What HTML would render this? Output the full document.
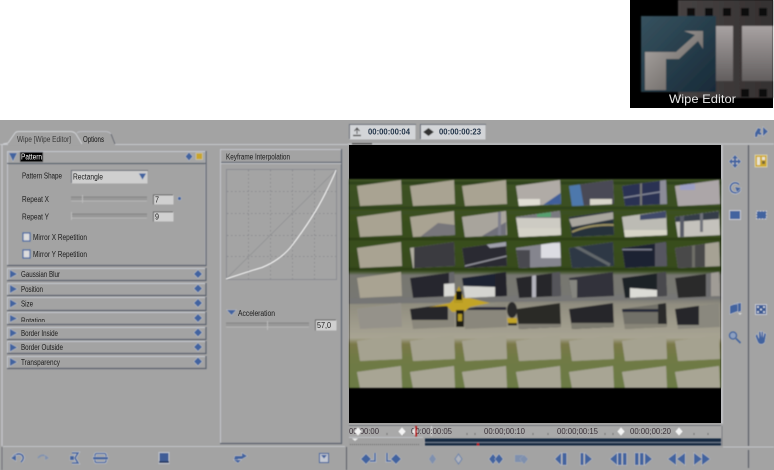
<!DOCTYPE html>
<html><head><meta charset="utf-8"><style>
html,body{margin:0;padding:0;background:#fff}
svg{display:block;position:absolute;left:0;top:0}
text{font-family:"Liberation Sans",sans-serif;font-size:8px;fill:#1a1a1a}
.i{fill:#42639f;stroke:#c3c8d2;stroke-width:.8;paint-order:stroke}
.f{fill:#7f90ae;stroke:#adb1ba;stroke-width:.6;paint-order:stroke}
.l{fill:none;stroke:#42639f;stroke-width:1.6}
.m{fill:none;stroke:#c3c8d2;stroke-width:2.8}
</style></head><body>
<svg width="774" height="470" viewBox="0 0 774 470" xmlns="http://www.w3.org/2000/svg">
<defs>
<filter id="b" x="-2%" y="-2%" width="104%" height="104%"><feGaussianBlur stdDeviation=".45"/></filter>
<filter id="v" x="-2%" y="-2%" width="104%" height="104%"><feGaussianBlur stdDeviation=".85"/></filter>
<filter id="t" x="-5%" y="-20%" width="110%" height="140%"><feGaussianBlur stdDeviation=".3"/></filter>
<linearGradient id="fs" x1="0" x2="1" y1="0" y2="0"><stop offset="0" stop-color="#464242"/><stop offset="1" stop-color="#343030"/></linearGradient>
<linearGradient id="fw" x1="0" x2="0" y1="0" y2="1"><stop offset="0" stop-color="#a8a2a2"/><stop offset="1" stop-color="#625e5e"/></linearGradient>
<linearGradient id="bs" x1="0" x2="1" y1="0" y2="1"><stop offset="0" stop-color="#36525f"/><stop offset="1" stop-color="#182a38"/></linearGradient>
<linearGradient id="gs" x1="0" x2="1" y1="0" y2="1"><stop offset="0" stop-color="#b0aba8"/><stop offset="1" stop-color="#5c5855"/></linearGradient>
<linearGradient id="bgr" x1="0" x2="0" y1="0" y2="1">
<stop offset="0" stop-color="#3c5120"/><stop offset=".44" stop-color="#364b1e"/><stop offset=".46" stop-color="#76766f"/><stop offset=".57" stop-color="#777772"/><stop offset=".6" stop-color="#908d7f"/><stop offset=".76" stop-color="#a8a493"/><stop offset=".79" stop-color="#7a7848"/><stop offset=".86" stop-color="#6f7a44"/><stop offset="1" stop-color="#6b7a44"/>
</linearGradient>
<clipPath id="tiles">
<path d="M357 186L401 180L402 204L360 206ZM410 186L454 180L455 204L413 206ZM462 186L506 180L507 204L465 206ZM516 186L560 180L561 204L519 206ZM569 186L613 180L614 204L572 206ZM622 186L666 180L667 204L625 206ZM675 186L719 180L720 204L678 206Z"/>
<path d="M357 217L401 211L402 235L360 237ZM410 217L454 211L455 235L413 237ZM462 217L506 211L507 235L465 237ZM516 217L560 211L561 235L519 237ZM569 217L613 211L614 235L572 237ZM622 217L666 211L667 235L625 237ZM675 217L719 211L720 235L678 237Z"/>
<path d="M357 248L401 242L402 266L360 268ZM410 248L454 242L455 266L413 268ZM462 248L506 242L507 266L465 268ZM516 248L560 242L561 266L519 268ZM569 248L613 242L614 266L572 268ZM622 248L666 242L667 266L625 268ZM675 248L719 242L720 266L678 268Z"/>
<path d="M357 278L401 272L402 296L360 298ZM410 278L454 272L455 296L413 298ZM462 278L506 272L507 296L465 298ZM516 278L560 272L561 296L519 298ZM569 278L613 272L614 296L572 298ZM622 278L666 272L667 296L625 298ZM675 278L719 272L720 296L678 298Z"/>
<path d="M357 309L401 303L402 327L360 329ZM410 309L454 303L455 327L413 329ZM462 309L506 303L507 327L465 329ZM516 309L560 303L561 327L519 329ZM569 309L613 303L614 327L572 329ZM622 309L666 303L667 327L625 329ZM675 309L719 303L720 327L678 329Z"/>
<path d="M357 341L401 335L402 359L360 361ZM410 341L454 335L455 359L413 361ZM462 341L506 335L507 359L465 361ZM516 341L560 335L561 359L519 361ZM569 341L613 335L614 359L572 361ZM622 341L666 335L667 359L625 361ZM675 341L719 335L720 359L678 361Z"/>
<path d="M357 372L401 366L402 388L360 388ZM410 372L454 366L455 388L413 388ZM462 372L506 366L507 388L465 388ZM516 372L560 366L561 388L519 388ZM569 372L613 366L614 388L572 388ZM622 372L666 366L667 388L625 388ZM675 372L719 366L720 388L678 388Z"/>
</clipPath>
</defs>

<rect width="774" height="120" fill="#fff"/>
<rect y="120" width="774" height="350" fill="#a3a3a3"/>

<!-- Wipe editor icon -->
<rect x="630" y="0" width="143" height="108" fill="#000"/>
<g filter="url(#v)">
<rect x="678" y="0" width="95" height="98" fill="url(#fs)"/>
<g fill="#0b0b0b"><rect x="687" y="8" width="8" height="8"/><rect x="705" y="8" width="8" height="8"/><rect x="723" y="8" width="8" height="8"/><rect x="741" y="8" width="8" height="8"/><rect x="759" y="8" width="8" height="8"/><rect x="741" y="89" width="8" height="8"/><rect x="759" y="89" width="8" height="8"/></g>
<rect x="716" y="26" width="17" height="55" fill="url(#fw)"/>
<rect x="742" y="26" width="31" height="55" fill="url(#fw)"/>
<rect x="641" y="16" width="75" height="76" fill="url(#bs)"/>
<path d="M645 52H676L695 35L684 31H703V49L698 41L679 59H666V90H645Z" fill="url(#gs)"/>
</g>
<text x="669" y="103" style="font-size:12px;fill:#e8e8e8" textLength="67" lengthAdjust="spacingAndGlyphs" filter="url(#t)">Wipe Editor</text>

<g filter="url(#b)">
<!-- frame lines -->
<path d="M2 145V446" stroke="#c6c8cc" stroke-width="1.2" fill="none"/>
<path d="M0 144.500H8M115 144.500H348" stroke="#c6c8cc" stroke-width="1"/>
<path d="M348 144H774" stroke="#c2c4c8" stroke-width="1.2"/>
<path d="M3 446.500H345" stroke="#c2c4c8"/>
<path d="M2 447V470" stroke="#6f7278"/>
<path d="M346.500 447V470" stroke="#5d6068"/>
<path d="M748.500 145V446M748.500 450V468" stroke="#5d6068" stroke-width="1.2"/>
<path d="M722 145V424" stroke="#c6c8cc" stroke-width="1.6"/>
<path d="M722 426V446" stroke="#7c7e84"/>
<path d="M723 447H774" stroke="#c2c4c8"/>

<!-- tabs -->
<path d="M3 144L8 143L15 133Q16 131.500 19 131.500H70Q74 131.500 76 134L82 144" fill="#a3a3a3" stroke="#d0d2d6"/>
<path d="M77 133Q78 131.500 82 131.500H105Q109 131.500 111 134L115 143.500" fill="#a3a3a3" stroke="#bcbec4"/>
<path d="M111 134L115 144" stroke="#5d6068" fill="none"/>
<rect x="8" y="143" width="73" height="3" fill="#a3a3a3"/>
</g>

<text x="17" y="142" textLength="54" lengthAdjust="spacingAndGlyphs" style="fill:#3a3a3a" filter="url(#t)">Wipe [Wipe Editor]</text>
<text x="83" y="142" textLength="21" lengthAdjust="spacingAndGlyphs" style="fill:#111" filter="url(#t)">Options</text>

<g filter="url(#b)">
<!-- pattern box -->
<rect x="7.500" y="151.500" width="198" height="12" fill="#a6a6a6" stroke="#c4c8d0"/>
<path d="M7 163.500H206V151" stroke="#5d6470" stroke-width="1.2" fill="none"/>
<path d="M7.500 164V265.500H205.500V164" fill="none" stroke="#c4c6cc"/>
<path d="M7 265.500H206V164" fill="none" stroke="#5d6470" stroke-width="1.2"/>
<rect x="20" y="152" width="23" height="10" fill="#000"/>
<path d="M9 153H17L13 161Z" class="i"/>
<path d="M189 152.500L192.500 156.500L189 160.500L185.500 156.500Z" class="i"/>
<rect x="196" y="153" width="6.500" height="6.500" fill="#c9a52a" stroke="#ccc8b0" stroke-width=".7"/>

<!-- dropdown -->
<rect x="71.500" y="170.500" width="76" height="13" fill="#cfcfcf"/>
<path d="M71.500 183V170.500H148" fill="none" stroke="#6c7078"/>
<path d="M139 173.500H146L142.500 179.500Z" class="i"/>

<!-- sliders -->
<rect x="71" y="197" width="76" height="4" fill="#989898"/>
<path d="M71 197H147" stroke="#858585"/><path d="M71 201H147" stroke="#b6b6b6"/>
<path d="M82.500 195V203" stroke="#bbb"/>
<rect x="71" y="214" width="76" height="4" fill="#989898"/>
<path d="M71 214H147" stroke="#858585"/><path d="M71 218H147" stroke="#b6b6b6"/>
<path d="M71.500 212V220" stroke="#bbb"/>
<rect x="153.500" y="195" width="20" height="9.500" fill="#d0d0d0"/><path d="M153.500 204.500V195H173" fill="none" stroke="#666"/>
<rect x="153.500" y="212" width="20" height="9.500" fill="#d0d0d0"/><path d="M153.500 221.500V212H173" fill="none" stroke="#666"/>
<circle cx="179.500" cy="198.500" r="1.600" class="i"/>

<!-- checkboxes -->
<rect x="23" y="233" width="7" height="8" fill="#dcdcdc" stroke="#4a6aa5" stroke-width="1.200"/>
<rect x="23" y="250" width="7" height="8" fill="#dcdcdc" stroke="#4a6aa5" stroke-width="1.200"/>

<!-- collapsed bars -->
<g fill="none">
<path d="M7.500 280V268.500H205" stroke="#c4c8d0"/><path d="M7 280.500H206V268" stroke="#5d6470" stroke-width="1.200"/>
<path d="M7.500 295V283.500H205" stroke="#c4c8d0"/><path d="M7 295.500H206V283" stroke="#5d6470" stroke-width="1.200"/>
<path d="M7.500 310V297.500H205" stroke="#c4c8d0"/><path d="M7 310.500H206V297" stroke="#5d6470" stroke-width="1.200"/>
<path d="M7.500 324V312.500H205" stroke="#c4c8d0"/><path d="M7 324.500H206V312" stroke="#5d6470" stroke-width="1.200"/>
<path d="M7.500 339V327.500H205" stroke="#c4c8d0"/><path d="M7 339.500H206V327" stroke="#5d6470" stroke-width="1.200"/>
<path d="M7.500 353V341.500H205" stroke="#c4c8d0"/><path d="M7 353.500H206V341" stroke="#5d6470" stroke-width="1.200"/>
<path d="M7.500 368V356.500H205" stroke="#c4c8d0"/><path d="M7 368.500H206V356" stroke="#5d6470" stroke-width="1.200"/>
</g>
<g class="i">
<path d="M10 270L17 274L10 278Z"/><path d="M10 285L17 289L10 293Z"/><path d="M10 299.500L17 303.500L10 307.500Z"/><path d="M10 315L17 318.500L10 322Z"/><path d="M10 329L17 333L10 337Z"/><path d="M10 343.500L17 347.500L10 351.500Z"/><path d="M10 358L17 362L10 366Z"/>
<path d="M198 270L202 274L198 278L194 274Z"/><path d="M198 284.500L202 288.500L198 292.500L194 288.500Z"/><path d="M198 299L202 303L198 307L194 303Z"/><path d="M198 314L202 318L198 322L194 318Z"/><path d="M198 328.500L202 332.500L198 336.500L194 332.500Z"/><path d="M198 343L202 347L198 351L194 347Z"/><path d="M198 357.500L202 361.500L198 365.500L194 361.500Z"/>
</g>

<!-- keyframe panel -->
<path d="M220.500 443V149.500H341" fill="none" stroke="#c4c6cc"/>
<path d="M220 443.500H341.500V149" fill="none" stroke="#5d6470" stroke-width="1.200"/>
<path d="M221 162.500H341" stroke="#5d6470" stroke-width="1.200"/><path d="M221 163.500H341" stroke="#c0c2c6"/>
<rect x="226.500" y="169.500" width="110" height="110" fill="#a4a4a4" stroke="#8a8c92"/>
<path d="M248.500 170V279M270.500 170V279M292.500 170V279M314.500 170V279M227 191.500H336M227 213.500H336M227 235.500H336M227 256.500H336" stroke="#8b8b8f" stroke-dasharray="1.500 2.500" fill="none"/>
<path d="M226 279L336 170" stroke="#8e8f92" stroke-width=".7" fill="none"/>
<path d="M226 279C238 275 250 271 262 267.500C272 263.500 284 256 292 245.500C303 231 316 212 325 194C330 184 334 176 336 170" stroke="#f4f4f4" stroke-width="1" fill="none"/>
<path d="M227 310H236L231.500 315Z" class="i"/>
<rect x="226" y="323" width="83" height="4" fill="#989898"/>
<path d="M226 323H309" stroke="#858585"/><path d="M226 327H309" stroke="#b6b6b6"/>
<path d="M267.500 321V330" stroke="#bbb"/>
<rect x="315.500" y="320" width="21" height="10.500" fill="#d0d0d0"/><path d="M315.500 330.500V320H336" fill="none" stroke="#666"/>

<!-- timecode boxes -->
<rect x="349.500" y="124.500" width="66" height="15" fill="#d3d5d8"/><path d="M349.500 139V124.500H416" fill="none" stroke="#666c78"/>
<rect x="420.500" y="124.500" width="65" height="15" fill="#d3d5d8"/><path d="M420.500 139V124.500H486" fill="none" stroke="#666c78"/>
<path d="M353 135.500H361" stroke="#444" stroke-width="1.300"/><path d="M357 128V134M354.500 131L357 128L359.500 131" stroke="#444" fill="none"/>
<path d="M428 129L424 132L428 135ZM429 129L433 132L429 135Z" stroke="#333" fill="#333"/>
<rect x="352" y="143" width="20" height="1.500" fill="#555"/>
</g>

<text x="368" y="134.500" textLength="42" lengthAdjust="spacingAndGlyphs" style="font-weight:bold;fill:#24344a" filter="url(#t)">00:00:00:04</text>
<text x="439" y="134.500" textLength="42" lengthAdjust="spacingAndGlyphs" style="font-weight:bold;fill:#24344a" filter="url(#t)">00:00:00:23</text>

<!-- panel text -->
<g filter="url(#t)">
<text x="21" y="159.500" textLength="21" lengthAdjust="spacingAndGlyphs" style="fill:#fff">Pattern</text>
<text x="22" y="178.500" textLength="40" lengthAdjust="spacingAndGlyphs">Pattern Shape</text>
<text x="73" y="179.500" textLength="30" lengthAdjust="spacingAndGlyphs">Rectangle</text>
<text x="22" y="202" textLength="27" lengthAdjust="spacingAndGlyphs">Repeat X</text>
<text x="22" y="219.500" textLength="27" lengthAdjust="spacingAndGlyphs">Repeat Y</text>
<text x="155" y="202.500" textLength="4" lengthAdjust="spacingAndGlyphs">7</text>
<text x="155" y="219.500" textLength="4" lengthAdjust="spacingAndGlyphs">9</text>
<text x="33" y="240" textLength="54" lengthAdjust="spacingAndGlyphs">Mirror X Repetition</text>
<text x="33" y="257" textLength="54" lengthAdjust="spacingAndGlyphs">Mirror Y Repetition</text>
<text x="21" y="277" textLength="39" lengthAdjust="spacingAndGlyphs">Gaussian Blur</text>
<text x="21" y="292" textLength="22" lengthAdjust="spacingAndGlyphs">Position</text>
<text x="21" y="306.500" textLength="12" lengthAdjust="spacingAndGlyphs">Size</text>
<svg x="0" y="312" width="210" height="10" viewBox="0 312 210 10" overflow="hidden"><text x="21" y="323.500" textLength="24" lengthAdjust="spacingAndGlyphs">Rotation</text></svg>
<text x="21" y="336" textLength="37" lengthAdjust="spacingAndGlyphs">Border Inside</text>
<text x="21" y="350" textLength="42" lengthAdjust="spacingAndGlyphs">Border Outside</text>
<text x="21" y="365" textLength="39" lengthAdjust="spacingAndGlyphs">Transparency</text>
<text x="226" y="159.500" textLength="64" lengthAdjust="spacingAndGlyphs">Keyframe Interpolation</text>
<text x="238" y="316" textLength="37" lengthAdjust="spacingAndGlyphs">Acceleration</text>
<text x="317" y="328" textLength="14" lengthAdjust="spacingAndGlyphs">57,0</text>
</g>

<!-- video -->
<rect x="349" y="145" width="372" height="278" fill="#000"/>
<g filter="url(#v)">
<rect x="349" y="179" width="372" height="209" fill="url(#bgr)"/>
<path d="M349 183H721M349 208H721M349 239H721M349 269H721" stroke="#2a3e18" stroke-width="3" opacity=".75"/>
<path d="M349 301L721 296" stroke="#767674" stroke-width="6"/>
<g clip-path="url(#tiles)">
<rect x="349" y="179" width="372" height="209" fill="#a9a392"/>
<!-- row 0 -->
<rect x="516" y="179" width="46" height="28" fill="#b0aba6"/><path d="M540 207L562 192V207Z" fill="#3f5f9a"/><rect x="516" y="199" width="24" height="7" fill="#e0ded4"/>
<rect x="569" y="179" width="46" height="28" fill="#4a4a54"/><path d="M569 186L580 184L584 207H572Z" fill="#4e78ac"/><rect x="590" y="199" width="22" height="7" fill="#d8d6ca"/>
<rect x="622" y="179" width="46" height="28" fill="#2a3252"/><path d="M622 198L666 191" stroke="#8e92a0" stroke-width="1.200"/><rect x="640" y="180" width="2" height="26" fill="#777"/><rect x="660" y="179" width="8" height="28" fill="#8c8c98"/>
<rect x="675" y="179" width="46" height="28" fill="#aca6a8"/><rect x="680" y="184" width="15" height="6" fill="#9ca0c4"/>
<!-- row 1 -->
<path d="M420 237L438 223L455 225V237Z" fill="#77767a"/>
<rect x="462" y="211" width="46" height="26" fill="#a8a49c"/><path d="M482 236L506 222V237Z" fill="#70707a"/><rect x="498" y="211" width="3" height="26" fill="#7f7f8c"/>
<rect x="516" y="211" width="46" height="26" fill="#cdcbc3"/><rect x="516" y="211" width="46" height="7" fill="#7a7a80"/><rect x="537" y="211" width="14" height="6" fill="#56a070"/><rect x="516" y="228" width="46" height="9" fill="#d4d2c8"/>
<rect x="569" y="211" width="46" height="26" fill="#27303a"/><path d="M569 219L614 212V219L572 227Z" fill="#a8a69e"/><path d="M572 232Q590 224 614 225" stroke="#9a9060" stroke-width="2" fill="none"/>
<rect x="622" y="211" width="46" height="26" fill="#bcbbb4"/><path d="M640 215L666 211V218L640 220Z" fill="#3f4a6a"/><rect x="622" y="230" width="46" height="7" fill="#d6d4c6"/>
<rect x="675" y="211" width="46" height="26" fill="#c4c2bc"/><path d="M675 216L719 211V219L675 222Z" fill="#353c4a"/><rect x="680" y="212" width="4" height="25" fill="#595c68"/><rect x="700" y="212" width="3" height="20" fill="#70727a"/>
<!-- row 2 -->
<rect x="410" y="242" width="46" height="26" fill="#3a3a40"/><rect x="410" y="242" width="4" height="26" fill="#b0ada0"/>
<rect x="462" y="242" width="46" height="26" fill="#2a2a30"/><path d="M465 266L507 256" stroke="#9d9da6" stroke-width="1.200"/><path d="M485 243L507 241V246L490 248Z" fill="#a0a0ac"/>
<rect x="516" y="242" width="46" height="26" fill="#85858e"/><rect x="516" y="250" width="14" height="18" fill="#4a4a50"/><rect x="541" y="243" width="20" height="15" fill="#dcdce2"/>
<rect x="569" y="242" width="46" height="26" fill="#2f3844"/><path d="M575 246L610 265" stroke="#62676a" stroke-width="3"/>
<rect x="622" y="242" width="46" height="26" fill="#1f2430"/><rect x="655" y="242" width="13" height="26" fill="#565660"/><rect x="622" y="249" width="30" height="1.200" fill="#8c90a0"/>
<rect x="675" y="242" width="46" height="26" fill="#48484a"/><rect x="705" y="242" width="16" height="26" fill="#a6a294"/><rect x="692" y="242" width="3" height="26" fill="#6e6e68"/>
<!-- row 3 -->
<rect x="410" y="272" width="46" height="26" fill="#28282e"/><path d="M444 284L456 283V298H444Z" fill="#d8d8d4"/><rect x="449" y="272" width="7" height="11" fill="#66666a"/>
<rect x="462" y="272" width="46" height="26" fill="#1c2030"/><path d="M462 286L495 287V298H462Z" fill="#d4d4d0"/><rect x="495" y="272" width="13" height="26" fill="#22222a"/>
<rect x="516" y="272" width="46" height="26" fill="#25252c"/><rect x="532" y="272" width="4" height="26" fill="#b4b4bc"/><rect x="552" y="272" width="10" height="26" fill="#55555a"/>
<rect x="569" y="272" width="46" height="26" fill="#30323a"/><rect x="569" y="280" width="8" height="18" fill="#85857f"/>
<rect x="622" y="272" width="46" height="26" fill="#1d2028"/><path d="M630 288L658 290V298H630Z" fill="#dcdcd6"/><rect x="657" y="272" width="11" height="26" fill="#4a4a4d"/>
<rect x="675" y="272" width="46" height="26" fill="#2a2a2c"/><rect x="706" y="272" width="5" height="26" fill="#6e6e70"/><rect x="711" y="272" width="10" height="26" fill="#a09c96"/>
<!-- row 4 -->
<rect x="349" y="303" width="54" height="27" fill="#95928a"/>
<rect x="410" y="303" width="46" height="27" fill="#8a877c"/><rect x="410" y="303" width="38" height="17" fill="#25252b"/>
<rect x="462" y="303" width="46" height="27" fill="#8a877c"/><rect x="462" y="307" width="46" height="3" fill="#2a2c38"/>
<rect x="516" y="303" width="46" height="27" fill="#2a2a28"/><rect x="516" y="324" width="46" height="6" fill="#827f74"/>
<rect x="569" y="303" width="46" height="27" fill="#28282a"/><rect x="569" y="323" width="46" height="7" fill="#7d7b70"/>
<rect x="622" y="303" width="46" height="27" fill="#716f68"/><rect x="622" y="309" width="38" height="3" fill="#262a38"/><rect x="658" y="303" width="10" height="24" fill="#2a2a2c"/><rect x="622" y="324" width="46" height="6" fill="#888578"/>
<rect x="675" y="303" width="46" height="27" fill="#8a887e"/><rect x="675" y="305" width="24" height="20" fill="#28282a"/>
<!-- rows 5,6 -->
<rect x="349" y="333" width="372" height="30" fill="#a5a290"/>
<rect x="349" y="364" width="372" height="25" fill="#a8a594"/>
</g>
<!-- plane -->
<path d="M428 307L450 303L455 298H470L490 303L470 307L464 312H452L447 306Z" fill="#c2a428"/>
<path d="M454 296L459 286L463 296L463 303H454Z" fill="#b59a20"/>
<path d="M456 291H462V300H456Z" fill="#17170f"/>
<rect x="456" y="310" width="8" height="17" fill="#1d1d18"/><rect x="458" y="314" width="4" height="7" fill="#b39a22"/>
<path d="M507 318H517V323H508Z" fill="#c2a428"/><rect x="508" y="323" width="9" height="2.500" fill="#222"/>
<ellipse cx="512" cy="310" rx="5" ry="8" fill="#2a2a2c"/>
</g>

<!-- timeline -->
<g filter="url(#b)">
<rect x="349" y="426" width="372" height="11" fill="#a9a9a9"/>
<path d="M349 425.500H721" stroke="#70727a"/>
<rect x="349" y="438" width="74" height="8" fill="#a0a0a0"/>
<path d="M349 437.500H423" stroke="#c0c2c6"/>
<path d="M350 444.500H420" stroke="#5d5d5d" stroke-dasharray="1 1"/>
<rect x="425" y="438.500" width="296" height="7" fill="#182a42"/>
<path d="M425 442.500H721" stroke="#8a96a8" stroke-width=".8"/>
<rect x="477" y="443" width="2" height="2.500" fill="#c01818"/>
<path d="M352 438.500H358L355 441Z" fill="#eee"/>
<g stroke="#666" stroke-width="1">
<path d="M387 433V435M403 433V435M467 433V435M475 433V435M533 433V435M548 433V435M605 433V435M613 433V435M679 433V435M694 433V435M708 433V435"/>
</g>
<path d="M431.500 426V436" stroke="#d8d8d8"/>
</g>
<g filter="url(#t)">
<text x="349" y="434" textLength="30" lengthAdjust="spacingAndGlyphs" style="fill:#3a3038">00:00:00</text>
<text x="411" y="434" textLength="41" lengthAdjust="spacingAndGlyphs" style="fill:#3a3038">00:00:00:05</text>
<text x="484" y="434" textLength="41" lengthAdjust="spacingAndGlyphs" style="fill:#3a3038">00:00;00:10</text>
<text x="557" y="434" textLength="41" lengthAdjust="spacingAndGlyphs" style="fill:#3a3038">00:00;00:15</text>
<text x="630" y="434" textLength="41" lengthAdjust="spacingAndGlyphs" style="fill:#3a3038">00:00;00:20</text>
</g>
<g filter="url(#b)">
<g fill="#f4f4f4" stroke="#888" stroke-width=".4">
<path d="M358 427L362 431.500L358 436L354 431.500Z"/><path d="M402 427L406 431.500L402 436L398 431.500Z"/><path d="M621 427L625 431.500L621 436L617 431.500Z"/><path d="M679 427L683 431.500L679 436L675 431.500Z"/><path d="M415 427L418 431.500L415 436L412 431.500Z"/>
</g>
<rect x="415" y="426" width="2" height="10.500" fill="#b81818"/>

<!-- bottom toolbar left -->
<path class="m" d="M13 457Q18 452 22 455Q25 458 21 462"/><path class="l" d="M13 457Q18 452 22 455Q25 458 21 462"/><path class="i" d="M11 458L16 455L16 461Z"/>
<path d="M38 458Q42 453 47 457" fill="none" stroke="#7d90b2" stroke-width="1.400"/><path class="f" d="M49 458L45 455L45 460Z"/>
<path class="m" d="M72 453H78L75 458L78 463H72"/><path class="l" d="M72 453H78L75 458L78 463H72"/><rect x="70" y="456" width="4" height="4" class="i"/>
<rect x="95" y="453.500" width="11" height="9" rx="1.500" fill="none" stroke="#c3c8d2" stroke-width="2.600"/><rect x="95" y="453.500" width="11" height="9" rx="1.500" fill="none" stroke="#42639f" stroke-width="1.300"/><rect x="93" y="457" width="15" height="2.400" class="i"/>
<rect x="159" y="452.500" width="10" height="11" fill="#3f5d97" stroke="#c3c8d2"/><rect x="159" y="461" width="10" height="2" fill="#2c3f68"/>
<path class="i" d="M235 456H242V453L247 456L242 459H238V462L234 459.500Z"/><path class="i" d="M234 460H241L238 463Z"/>
<rect x="319.500" y="453.500" width="9" height="9" fill="#c3c8d2" stroke="#42639f"/><path d="M321 455H327L324 458.500Z" fill="#42639f"/>

<!-- bottom toolbar right -->
<path class="i" d="M366 454L371 459L366 464L361 459Z"/><path class="m" d="M375 453V461H370"/><path class="l" d="M375 453V461H370"/>
<path class="m" d="M387 453V461H391"/><path class="l" d="M387 453V461H391"/><path class="i" d="M396 454L401 459L396 464L391 459Z"/>
<path class="f" d="M432.500 454L436 459L432.500 464L429 459Z"/>
<path d="M458.500 454L462 459L458.500 464L455 459Z" fill="#b0b4bc" stroke="#6d84ad"/>
<path class="i" d="M493 454L497 459L493 464L489 459Z"/><path class="i" d="M499 454L503 459L499 464L495 459Z"/>
<rect x="515" y="455" width="8" height="7" class="f"/><path class="f" d="M524 455L528 459L524 464L520 459Z"/>
<path class="i" d="M561 453V465L555 459Z"/><rect x="562.500" y="453" width="4" height="12" class="i"/>
<rect x="580.500" y="453" width="3" height="12" class="i"/><path class="i" d="M585 453L592 459L585 465Z"/>
<path class="i" d="M617 453V465L610 459Z"/><rect x="618" y="453" width="3.500" height="12" class="i"/><rect x="623" y="453" width="3.500" height="12" class="i"/>
<rect x="635" y="453" width="3.500" height="12" class="i"/><rect x="640" y="453" width="3.500" height="12" class="i"/><path class="i" d="M645 453L652 459L645 465Z"/>
<path class="i" d="M676 453V465L668 459Z"/><path class="i" d="M685 453V465L677 459Z"/>
<path class="i" d="M694 453L702 459L694 465Z"/><path class="i" d="M702 453L710 459L702 465Z"/>

<!-- right column icons -->
<path class="i" d="M735 155L738 158.500H736V160.500H738V158.500L741 161.500L738 164.500V162.500H736V164.500H738L735 168L732 164.500H734V162.500H732V164.500L729 161.500L732 158.500V160.500H734V158.500H732Z"/>
<path class="m" d="M739 185A5 5 0 1 0 740 190" transform="translate(0 -.5)"/><path class="l" d="M739 185A5 5 0 1 0 740 190" transform="translate(0 -.5)"/><path class="i" d="M735 187L741 188L737 192Z"/>
<rect x="729.500" y="210.500" width="11" height="9" fill="#42639f" stroke="#c3c8d2"/>
<rect x="755" y="155" width="12" height="12" fill="#d0ab2f" stroke="#ddd6b2" stroke-width=".8"/><rect x="757" y="157" width="3" height="8" fill="#e8e4d4"/><rect x="762" y="157" width="3" height="3" fill="#e8e4d4"/><rect x="762" y="161" width="3" height="3" fill="#7a6a3a"/>
<rect x="756.500" y="211" width="10" height="8" fill="#42639f" stroke="#c3c8d2" stroke-dasharray="2 1"/>
<path class="i" d="M730 306L738 303V311L730 314Z"/><path class="i" d="M734 304L741 303V311L738 312V304Z"/><path d="M738 313L742 313L740 315Z" fill="#d8d8d8"/>
<rect x="755.500" y="304.500" width="11" height="10" fill="#3a5a94" stroke="#c3c8d2"/><g fill="#d8dce4"><circle cx="758" cy="307" r="1"/><circle cx="764" cy="307" r="1"/><circle cx="758" cy="312" r="1"/><circle cx="764" cy="312" r="1"/><circle cx="761" cy="309.500" r="1"/></g>
<circle cx="733" cy="335.500" r="3.500" fill="#8da0c0" stroke="#42639f" stroke-width="1.300"/><path class="l" d="M736 338.500L740.500 343"/>
<path class="i" d="M757 334L759 339V332L760.500 331.500L761.500 338V331.500L763 332V338L764.500 333L766 334L765 340Q765 344 761 344Q758.500 344 757.500 341L755.500 336Z"/>
<path class="i" d="M755 133L758 128L761 129L760 132L762 134L760 135L758 134L757 137L755 137ZM763 127L768 131.500L763 136Z"/>
</g>
</svg>
</body></html>
